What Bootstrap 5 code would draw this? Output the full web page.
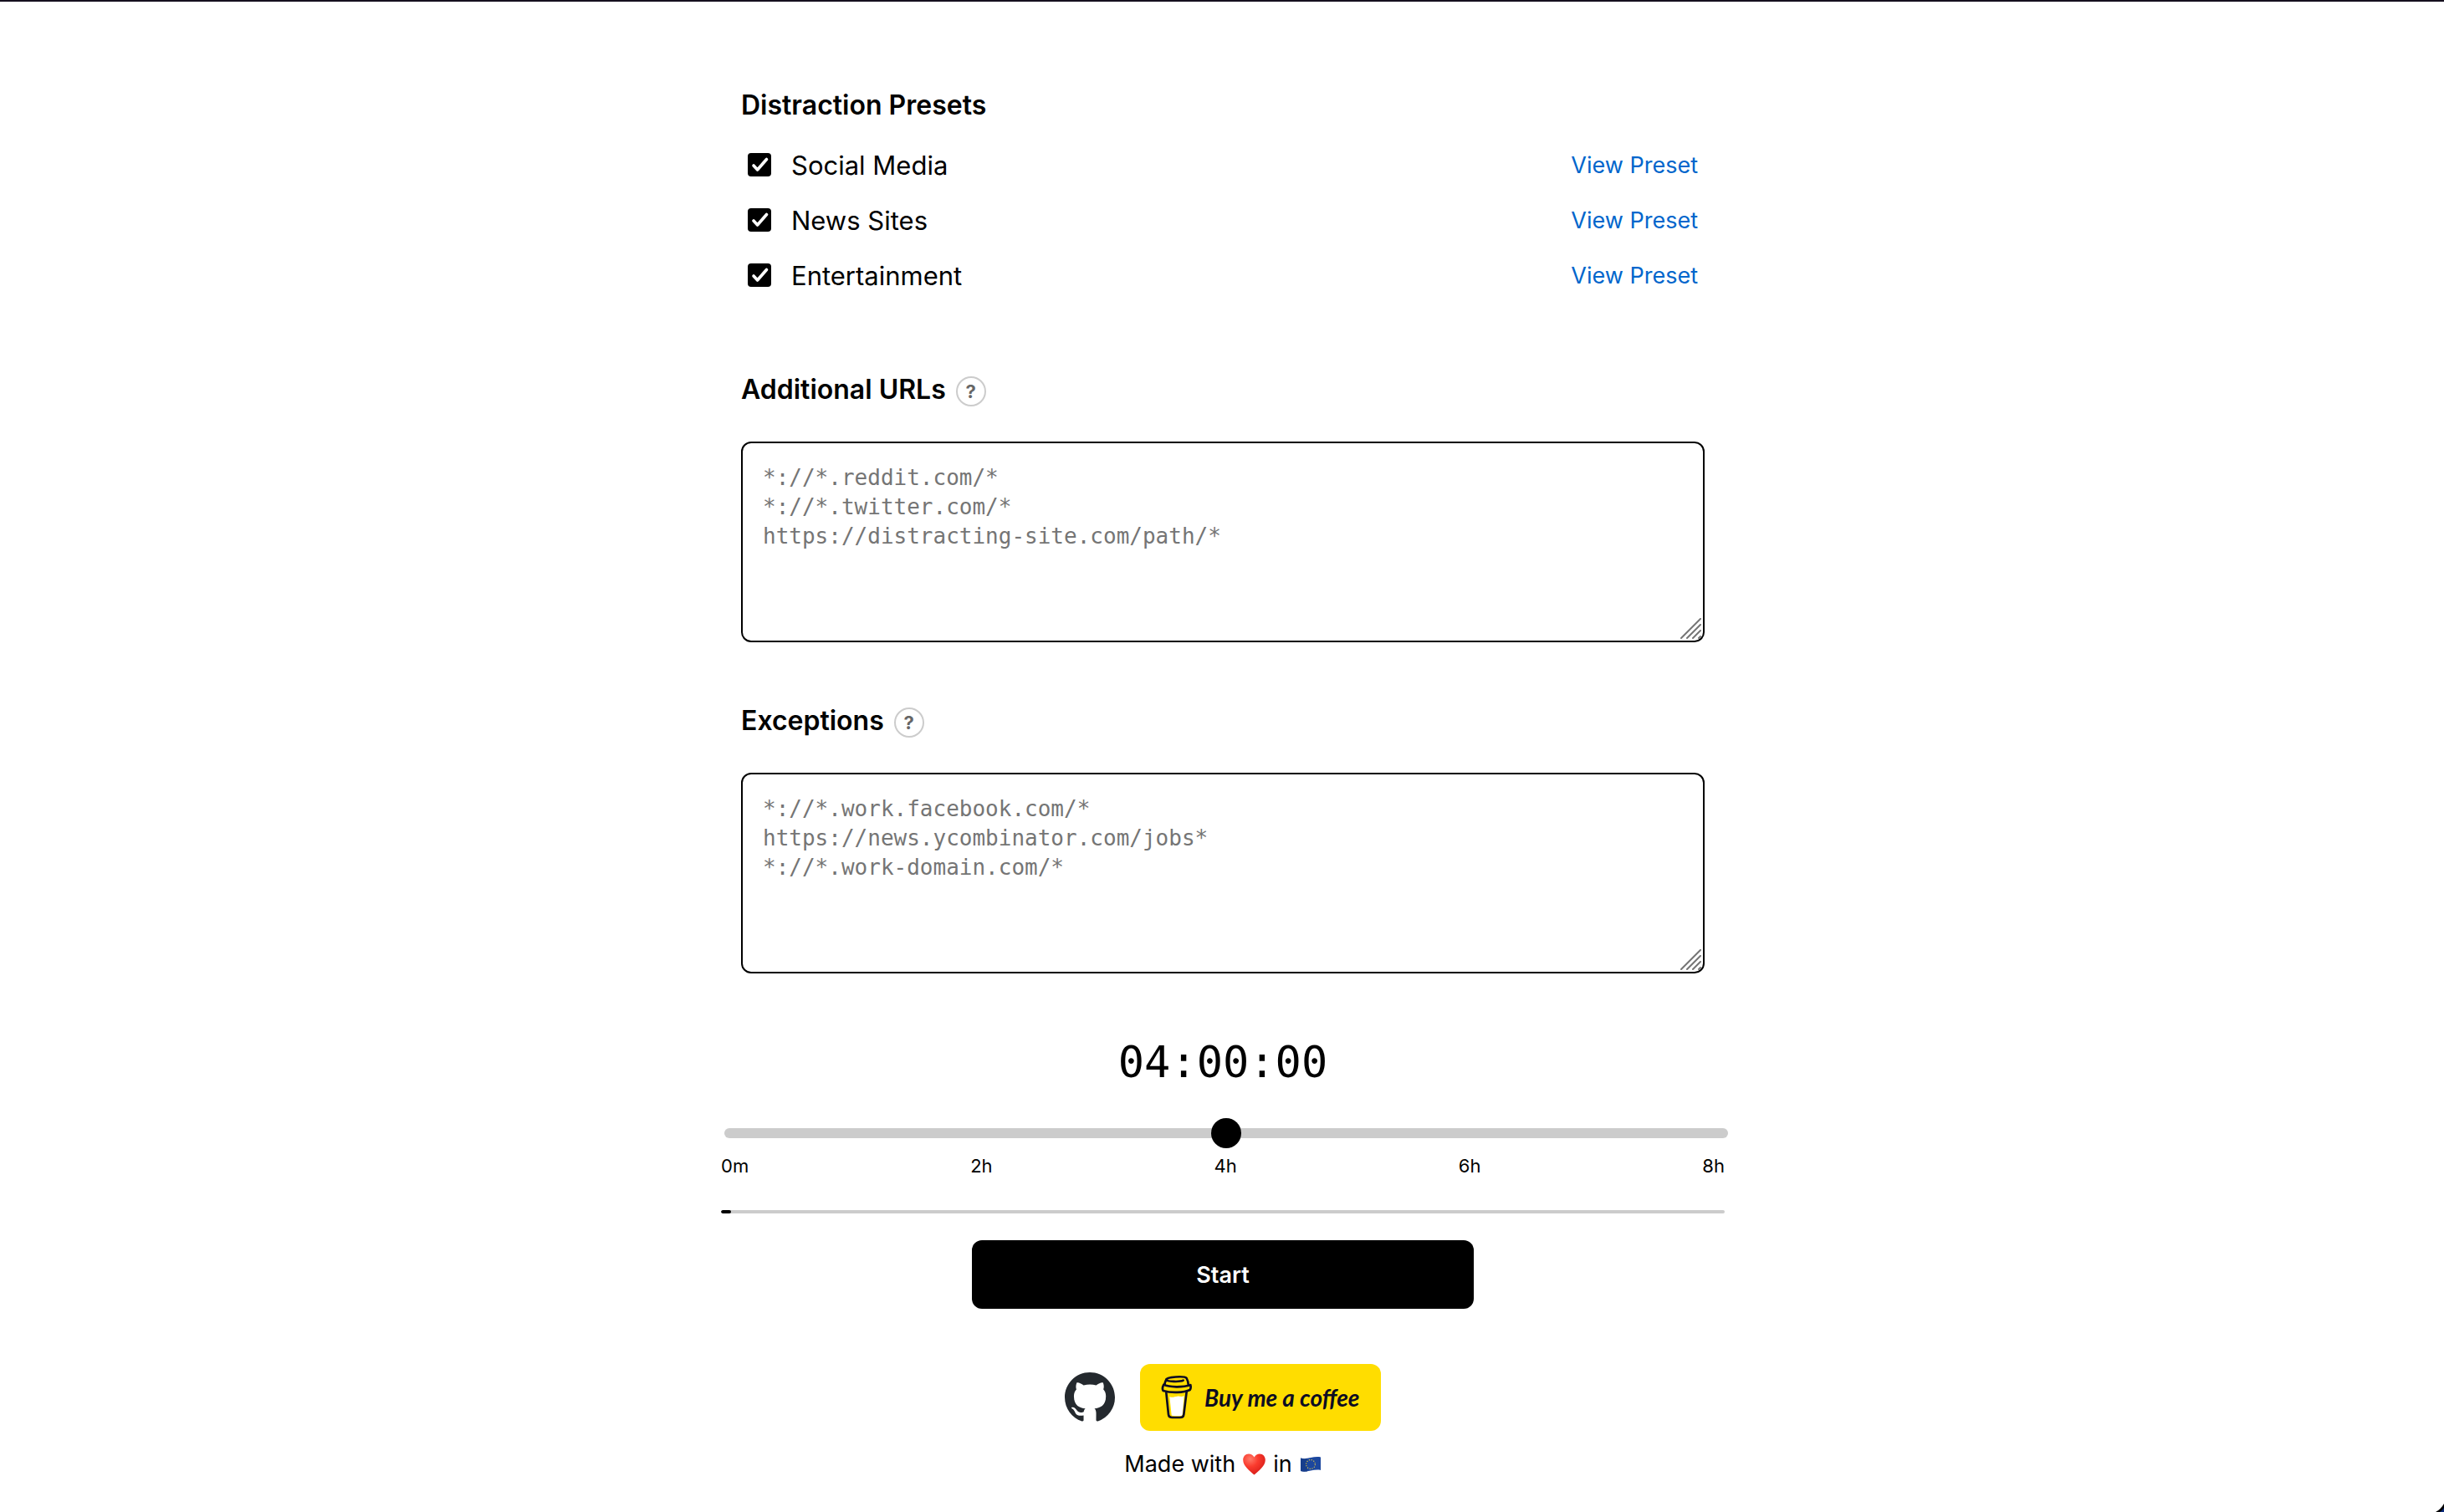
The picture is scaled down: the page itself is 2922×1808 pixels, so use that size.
<!DOCTYPE html>
<html lang="en">
<head>
<meta charset="utf-8">
<meta name="viewport" content="width=device-width, initial-scale=1">
<title>Focus timer</title>
<link href="https://cdn.jsdelivr.net/npm/bootstrap@5.3.0/dist/css/bootstrap.min.css" rel="stylesheet">
<style>
  body { padding-left: 2px; font-family: Inter, "Liberation Sans", sans-serif; color: #000; background: #fff; border-top: 2px solid #150f1e; font-size: 27px; line-height: 40px; }
  .page-column { max-width: 1200px; padding-top: 106px; }
  .section-title { margin: 0; padding-bottom: 4px; font-size: 32px; line-height: 36px; font-weight: 600; }
  .preset-row { height: 66px; }
  .preset-row .form-check-input { width: 28px; height: 28px; border: 0; border-radius: 4px; }
  .preset-row .form-check-input:checked { background: #000 url("data:image/svg+xml,%3Csvg xmlns='http://www.w3.org/2000/svg' viewBox='0 0 28 28'%3E%3Cpath fill='none' stroke='%23fff' stroke-width='3.6' stroke-linecap='round' stroke-linejoin='round' d='M7 15l4.600 5L22.500 7.500'/%3E%3C/svg%3E") center / 28px no-repeat; }
  .preset-label, .preset-link { padding-top: 2px; }
  .preset-label { font-size: 31px; }
  .preset-link { color: #06c; font-size: 27px; text-decoration: none; }
  .urls-group { margin-top: 86px; }
  .exceptions-group { margin-top: 76px; }
  .help-btn { width: 36px; height: 36px; border: 2px solid #ccc; border-radius: 50%; background: #fff; color: #666; font-size: 22px; line-height: 32px; font-weight: 700; }
  .url-box.form-control { height: 240px; margin-top: 40px; padding: 24px; border: 2px solid #000; border-radius: 12px; font: 26px/35px "DejaVu Sans Mono", monospace; resize: none; }
  .url-box::placeholder { color: #757575; }
  .grip { right: 3px; bottom: 3px; pointer-events: none; }
  .time-left { margin-top: 76px; font: 52px/60px "DejaVu Sans Mono", monospace; }
  .time-range { display: block; width: 100%; height: 36px; margin: 37px 0 0 4px; appearance: none; background: none; }
  .time-range::-webkit-slider-runnable-track { height: 12px; border-radius: 6px; background: #ccc; }
  .time-range::-webkit-slider-thumb { appearance: none; width: 36px; height: 36px; margin-top: -12px; border-radius: 50%; background: #000; }
  .ticks { margin-top: 5px; font-size: 22px; line-height: 32px; }
  .elapsed.progress { height: 4px; margin-top: 37px; background: #ccc; border-radius: 2px; }
  .elapsed .progress-bar { background: #000; border-radius: 2px; }
  .start-btn.btn { width: 50%; height: 82px; margin-top: 32px; padding-top: 8px; border-radius: 12px; background: #000; color: #fff; font-size: 27px; font-weight: 600; }
  .page-footer { margin-top: 66px; }
  .footer-links { gap: 30px; }
  .coffee-link { width: 288px; height: 80px; padding-left: 25px; gap: 14px; border-radius: 12px; background: #fd0; color: #0d0c22; font-family: Lato, sans-serif; font-size: 28px; font-style: italic; font-weight: 700; text-decoration: none; white-space: nowrap; }
  .made-in { margin-top: 20px; gap: 9px; }
</style>
</head>
<body>
<main class="page-column mx-auto">
  <form class="px-4">
    <h2 class="section-title mb-3">Distraction Presets</h2>
    <div class="preset-row d-flex align-items-center px-2">
      <input class="form-check-input m-0 me-4" type="checkbox" id="social" checked>
      <label class="preset-label" for="social">Social Media</label>
      <a class="preset-link ms-auto" href="#social">View Preset</a>
    </div>
    <div class="preset-row d-flex align-items-center px-2">
      <input class="form-check-input m-0 me-4" type="checkbox" id="news" checked>
      <label class="preset-label" for="news">News Sites</label>
      <a class="preset-link ms-auto" href="#news">View Preset</a>
    </div>
    <div class="preset-row d-flex align-items-center px-2">
      <input class="form-check-input m-0 me-4" type="checkbox" id="fun" checked>
      <label class="preset-label" for="fun">Entertainment</label>
      <a class="preset-link ms-auto" href="#fun">View Preset</a>
    </div>

    <div class="urls-group">
      <div class="d-flex align-items-center gap-2">
        <label class="section-title" for="urls">Additional URLs</label>
        <button type="button" class="help-btn p-0 ms-1">?</button>
      </div>
      <div class="position-relative">
        <textarea class="url-box form-control" id="urls" placeholder="*://*.reddit.com/*&#10;*://*.twitter.com/*&#10;https://distracting-site.com/path/*"></textarea>
        <svg class="grip position-absolute" width="26" height="26" viewBox="0 0 26 26" fill="none" stroke="#757575" stroke-width="2" stroke-linecap="round" aria-hidden="true"><path d="M1 24L24 1M8 24L24 8M15 24l9-9M22 24l2-2"/></svg>
      </div>
    </div>

    <div class="exceptions-group">
      <div class="d-flex align-items-center gap-2">
        <label class="section-title" for="exceptions">Exceptions</label>
        <button type="button" class="help-btn p-0 ms-1">?</button>
      </div>
      <div class="position-relative">
        <textarea class="url-box form-control" id="exceptions" placeholder="*://*.work.facebook.com/*&#10;https://news.ycombinator.com/jobs*&#10;*://*.work-domain.com/*"></textarea>
        <svg class="grip position-absolute" width="26" height="26" viewBox="0 0 26 26" fill="none" stroke="#757575" stroke-width="2" stroke-linecap="round" aria-hidden="true"><path d="M1 24L24 1M8 24L24 8M15 24l9-9M22 24l2-2"/></svg>
      </div>
    </div>
  </form>

  <div class="time-left text-center">04:00:00</div>
  <input class="time-range" type="range" min="0" max="480" value="240" aria-label="Session length">
  <div class="ticks d-flex justify-content-between">
    <span>0m</span><span>2h</span><span>4h</span><span>6h</span><span>8h</span>
  </div>
  <div class="elapsed progress"><div class="progress-bar" style="width: 1%"></div></div>
  <button type="button" class="start-btn btn d-block mx-auto">Start</button>

  <footer class="page-footer">
    <div class="footer-links d-flex justify-content-center align-items-center">
      <a href="#github" class="d-flex" aria-label="GitHub">
        <svg width="60" height="60" viewBox="0 0 16 16" fill="#24292e"><path d="M8 0C3.580 0 0 3.580 0 8c0 3.540 2.290 6.530 5.470 7.590.4.070.55-.17.55-.38 0-.19-.01-.82-.01-1.490-2.010.37-2.530-.49-2.690-.94-.09-.23-.48-.94-.82-1.130-.28-.15-.68-.52-.01-.53.63-.01 1.080.58 1.230.82.72 1.210 1.870.87 2.330.66.07-.52.28-.87.51-1.070-1.780-.2-3.640-.89-3.640-3.950 0-.87.31-1.590.82-2.150-.08-.2-.36-1.020.08-2.120 0 0 .67-.21 2.200.82.64-.18 1.320-.27 2-.27s1.360.09 2 .27c1.530-1.040 2.200-.82 2.200-.82.44 1.100.16 1.920.08 2.120.51.56.82 1.270.82 2.150 0 3.070-1.870 3.750-3.650 3.950.29.25.54.73.54 1.480 0 1.070-.01 1.930-.01 2.200 0 .21.15.46.55.38A8.010 8.010 0 0 0 16 8c0-4.420-3.580-8-8-8z"/></svg>
      </a>
      <a href="#coffee" class="coffee-link d-flex align-items-center">
        <svg width="38" height="54" viewBox="0 0 114 162" fill="none" stroke="#0d0c22" stroke-width="8" stroke-linecap="round" stroke-linejoin="round" aria-hidden="true">
          <path fill="#fff" stroke="none" d="M31 78c10 6 18-1 28-1 10-1 14 4 24-2l-6 70c-1 4-37 4-39 0z"/>
          <path d="M80 20C68 26 20 25 19 17 19 7 86 3 92 12c3 6 6 14 6 22"/>
          <path d="M19 17c-3 7-6 12-5 17M10 35c20 10 68 11 96 1 2 7 1 13-2 18-22 10-66 12-96 3-3-5-2-15 2-22z"/>
          <path d="M19 64l8 78c1 9 5 11 14 11h28c9 0 12-3 13-11l10-81"/>
        </svg>
        <span>Buy me a coffee</span>
      </a>
    </div>
    <div class="made-in d-flex justify-content-center align-items-center">
      <span>Made with</span>
      <svg width="27" height="26" viewBox="0 0 27 26" role="img" aria-label="love">
        <defs><radialGradient id="heartFill" cx=".32" cy=".25" r=".8"><stop offset="0" stop-color="#ff7a68"/><stop offset=".45" stop-color="#fa3b2e"/><stop offset="1" stop-color="#d71c18"/></radialGradient></defs>
        <path fill="url(#heartFill)" d="M13.500 4.500C15 1.500 17.500.4 20 .4c4 0 6.800 3.100 6.800 7.300C26.800 15 19 20.500 13.500 25.600 8 20.500.2 15 .2 7.700.2 3.500 3 .4 7 .4c2.500 0 5 1.100 6.500 4.100z"/>
      </svg>
      <span>in</span>
      <svg width="26" height="20" viewBox="0 0 26 20" role="img" aria-label="European Union">
        <path fill="#1c479e" d="M1 2.500C8 5 17-.5 25 1.500v15.500C17 15 8 20.500 1 18z"/>
        <path fill="#123579" d="M1 2.500c3 1 5 1 8 .2V18.700c-3 .6-5 .3-8-.7z" opacity=".5"/>
        <circle cx="13" cy="10" r="5.400" fill="none" stroke="#d9c34a" stroke-width="1.200" stroke-dasharray="1.200 1.627"/>
      </svg>
    </div>
  </footer>
</main>
<div class="position-fixed bottom-0 end-0 overflow-hidden pe-none" aria-hidden="true">
  <svg class="d-block" width="10" height="10" viewBox="0 0 10 10"><path fill="#000" d="M0 10Q6 7 10 0v10z"/><path fill="#0b2a7a" d="M5 10Q8 8 10 5v5z"/></svg>
</div>
<script src="https://cdn.jsdelivr.net/npm/bootstrap@5.3.0/dist/js/bootstrap.bundle.min.js"></script>
</body>
</html>
